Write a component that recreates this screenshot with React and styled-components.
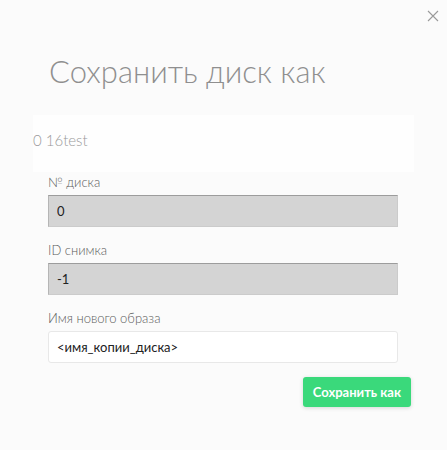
import styled, { createGlobalStyle } from "styled-components";

const GlobalStyle = createGlobalStyle`
  body {
    margin: 0;
    background: #fbfbfb;
    font-family: Lato, "Noto Sans", "Liberation Sans", sans-serif;
  }
`;

const Modal = styled.div`
  position: relative;
  min-height: 450px;
  box-sizing: border-box;
  padding-top: 51px;
  background: #fbfbfb;
`;

const CloseButton = styled.button`
  position: absolute;
  top: 10px;
  right: 8px;
  width: 12px;
  height: 12px;
  padding: 0;
  border: 0;
  background: none;
  cursor: pointer;
  svg {
    display: block;
  }
`;

const Title = styled.h1`
  margin: 0 0 0 49px;
  font-size: 31px;
  line-height: 40px;
  font-weight: 300;
  color: #8f8f8f;
`;

const InfoPanel = styled.div`
  margin: 24px 33px 0;
  padding: 15px 0 22px;
  background: #fefefe;
  font-size: 15px;
  line-height: 20px;
  font-weight: 300;
  color: #9a9a9a;
`;

const Form = styled.form`
  margin: 2px 49px 0 48px;
  display: flex;
  flex-direction: column;
`;

const Field = styled.label`
  display: flex;
  flex-direction: column;
  gap: 5px;
  margin-bottom: 15px;
  span {
    font-size: 13px;
    line-height: 16px;
    font-weight: 300;
    color: #5a5a5a;
  }
`;

const Input = styled.input`
  box-sizing: border-box;
  height: 32px;
  padding: 0 8px;
  font-family: inherit;
  font-size: 13px;
  color: #222;
  outline: none;
  border-radius: ${(p) => (p.disabled ? "0" : "3px")};
  background: ${(p) => (p.disabled ? "#d4d4d4" : "#ffffff")};
  border: 1px solid ${(p) => (p.disabled ? "#cbcbcb" : "#e8e8e8")};
  border-top-color: ${(p) => (p.disabled ? "#9c9c9c" : "#e8e8e8")};
  border-left-color: ${(p) => (p.disabled ? "#b5b5b5" : "#e8e8e8")};
  &:disabled {
    opacity: 1;
    -webkit-text-fill-color: #222;
  }
`;

const Actions = styled.div`
  display: flex;
  justify-content: flex-end;
  margin: -1px -13px 0 0;
`;

const SaveButton = styled.button`
  height: 30px;
  padding: 0 10px;
  border: 0;
  border-radius: 3px;
  background: #3ad97b;
  color: #ffffff;
  font-family: inherit;
  font-size: 13px;
  font-weight: 700;
  box-shadow: 0 1px 4px rgba(0, 0, 0, 0.15);
  cursor: pointer;
`;

const fields = [
  { label: "№ диска", value: "0", disabled: true },
  { label: "ID снимка", value: "-1", disabled: true },
  { label: "Имя нового образа", value: "<имя_копии_диска>", disabled: false },
];

const App = () => {
  return (
    <>
      <GlobalStyle />
      <Modal>
        <CloseButton aria-label="close">
          <svg width="12" height="12" viewBox="0 0 12 12">
            <path d="M1 1 L11 11 M11 1 L1 11" stroke="#9a9a9a" strokeWidth="1.1" fill="none" />
          </svg>
        </CloseButton>
        <Title>Сохранить диск как</Title>
        <InfoPanel>0 16test</InfoPanel>
        <Form onSubmit={(e) => e.preventDefault()}>
          {fields.map((f) => (
            <Field key={f.label}>
              <span>{f.label}</span>
              <Input defaultValue={f.value} disabled={f.disabled} />
            </Field>
          ))}
          <Actions>
            <SaveButton type="submit">Сохранить как</SaveButton>
          </Actions>
        </Form>
      </Modal>
    </>
  );
};

export default App;
